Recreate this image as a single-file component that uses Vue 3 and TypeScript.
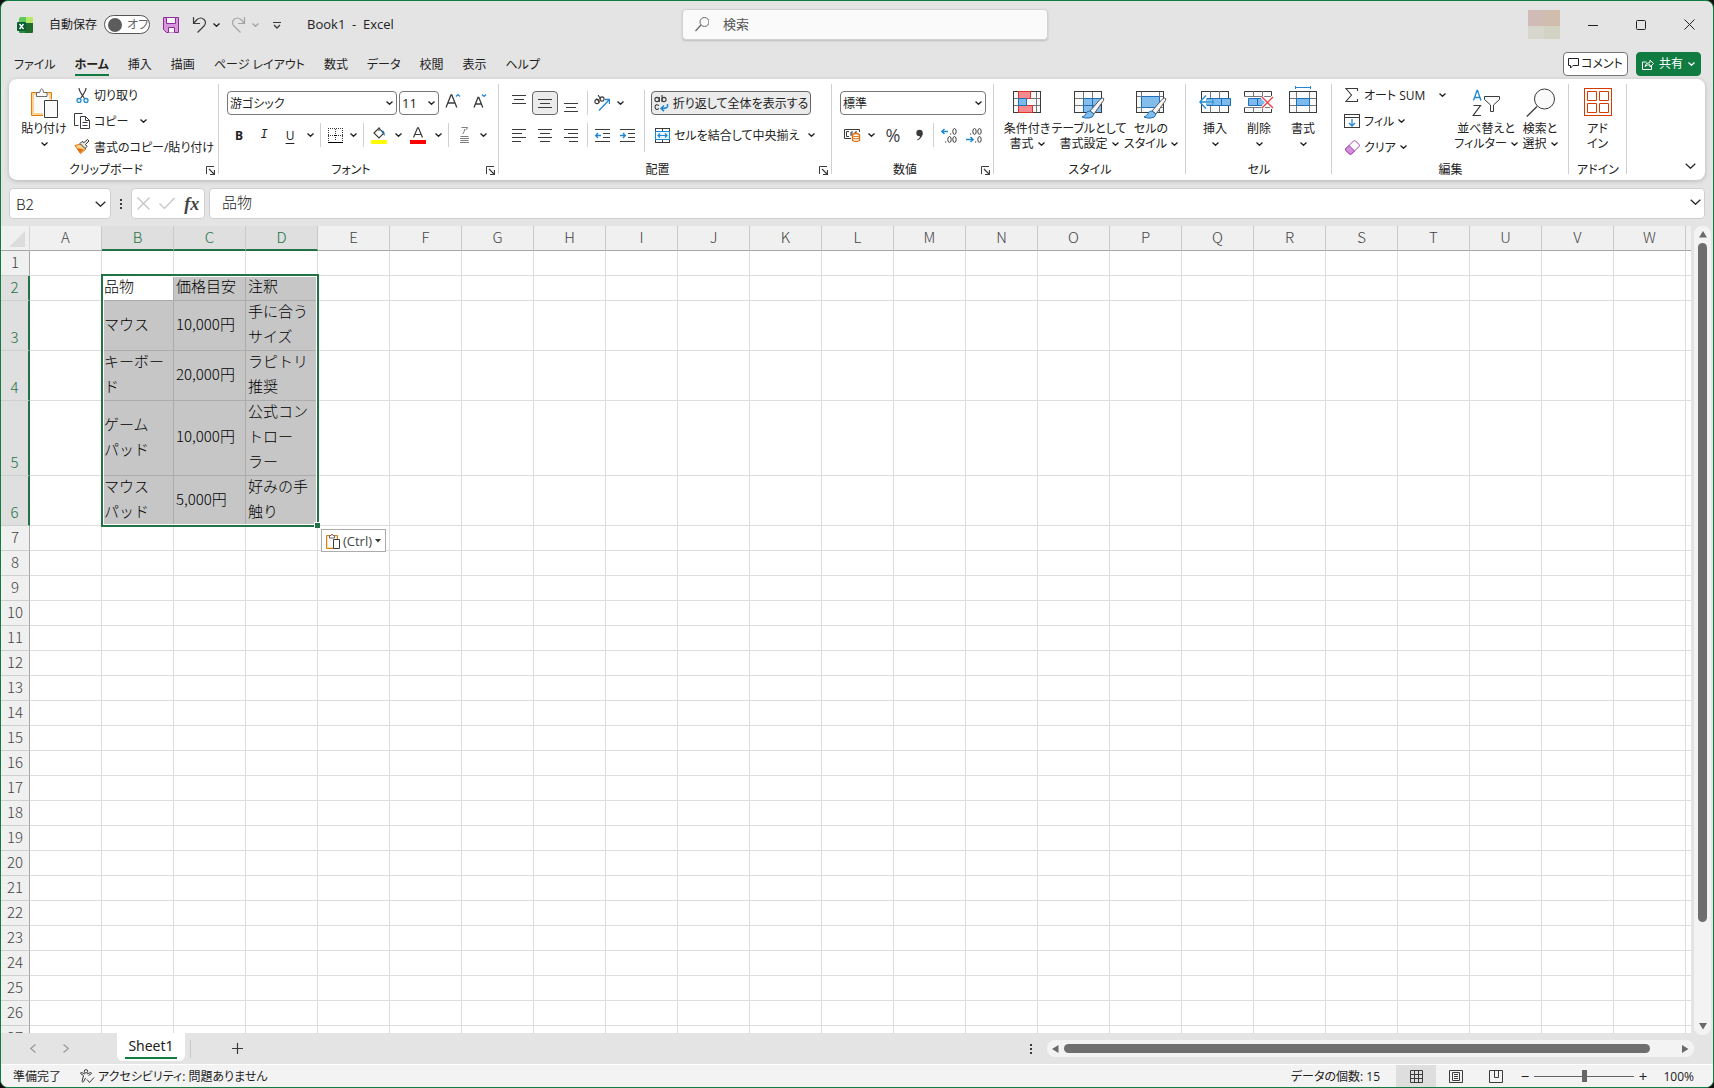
<script setup lang="ts">
import { h, ref } from 'vue'

const K = '#3b3b3b'
const B = '#1e88d2'
const lines = (rows: [number, number][]) =>
  rows.map(([a, b], i) => `<path d="M${a} ${i * 4 + 1.5}H${b}" stroke="${K}"/>`).join('')
const gridBase = `<rect x=".5" y=".5" width="27" height="21" fill="#fafafa" stroke="${K}"/>`

const icons: Record<string, string> = {
  excel: `<path d="M4 0h6v8H2V2q0-2 2-2z" fill="#5fc85a"/><path d="M10 0h5q1 0 1 1v5h-7V0z" fill="#b6e86a"/><path d="M2 6h7v10H3q-1 0-1-1z" fill="#2a8f3c"/><path d="M9 6h7v9q0 1-1 1H8z" fill="#1e6b2c"/><rect x="0" y="5" width="9" height="9" rx="1" fill="#0c5c33"/><path d="M2.500 7l4 5M6.500 7l-4 5" stroke="#fff" stroke-width="1.400"/>`,
  save: `<path d="M.5.5h15v15H3.500l-3-3z" fill="#d896dc" stroke="#8e2a9a"/><path d="M3.500.5h9v6h-9zM5.500 15.500v-5h6v5" fill="#f6f6f6" stroke="#8e2a9a"/>`,
  undo: `<path d="M1.500 0v6.500H8M1.500 6.500L5 2.500Q9-.5 12 2.500T12 9L5.500 15.500" fill="none" stroke="${K}" stroke-width="1.200"/>`,
  redo: `<path d="M13.500 0v6.500H7M13.500 6.500L10 2.500Q6-.5 3 2.500T3 9L9.500 15.500" fill="none" stroke="#a3a3a3" stroke-width="1.200"/>`,
  qat: `<path d="M0 1.500h8" stroke="${K}"/><path d="M1 4l3 3 3-3" fill="none" stroke="${K}" stroke-width="1.300"/>`,
  chev: `<path d="M.5.5L3.500 3.300 6.500.5" fill="none" stroke="currentColor" stroke-width="1.300"/>`,
  chevL: `<path d="M.7.7L5.500 5.300 10.300.7" fill="none" stroke="currentColor" stroke-width="1.200"/>`,
  search: `<circle cx="9.500" cy="5" r="4.500" fill="none" stroke="#666"/><path d="M6 8L.5 14" stroke="#666" stroke-width="1.200"/>`,
  min: `<path d="M0 5.500h10" stroke="#222"/>`,
  max: `<rect x=".5" y=".5" width="9" height="9" rx="1" fill="none" stroke="#222"/>`,
  close: `<path d="M.5.5l10 10M10.500.5l-10 10" stroke="#222"/>`,
  comment: `<path d="M.5.5h10v7H5L2.500 10V7.500h-2z" fill="none" stroke="#222"/>`,
  share: `<path d="M4.500 4H.5v7.500h9V8M3 8.500Q3.500 4.500 8 4.500V2l3.500 3.500L8 9V6.800Q5 6.500 3 8.500z" fill="none" stroke="#fff"/>`,
  paste: `<path d="M1.500 4.500h20v23h-20z" fill="#fbd28f" stroke="#e07c10"/><path d="M4 7h15v18H4z" fill="#fafafa"/><path d="M6.500 8.500v-4h3.200q.8-3.800 2-3.800t2 3.800h3.300v4z" fill="#fafafa" stroke="#6b6b6b"/><path d="M14 12.500h14v18H14z" fill="#fafafa" stroke="#fff" stroke-width="2"/><path d="M14.500 12.500h13v17h-13z" fill="#fafafa" stroke="${K}"/>`,
  cut: `<path d="M3 0q0 3 5.500 10.500M10 0q0 3-5.500 10.500" fill="none" stroke="${K}" stroke-width="1.200"/><circle cx="3" cy="12.500" r="2" fill="none" stroke="${B}" stroke-width="1.300"/><circle cx="10" cy="12.500" r="2" fill="none" stroke="${B}" stroke-width="1.300"/>`,
  copy: `<path d="M4.500 12.500H.5V.5h8" fill="none" stroke="${K}"/><path d="M6.500 3.500h5l4 4v8h-9z" fill="#fff" stroke="${K}"/><path d="M11.500 3.500v4h4M8.500 9.500h5M8.500 12.500h5" fill="none" stroke="${K}"/>`,
  brush: `<path d="M1 6.500l6-1.500 5 5-5.500 4.500z" fill="#fbd28f" stroke="#e0700f"/><path d="M3 9l7 1.500-4 3.500z" fill="#e0700f"/><path d="M6 4.500l5 5 2-2-1.500-2L15 2 13.500.5 10 3.500l-2-1z" fill="#e8e8e8" stroke="${K}"/>`,
  growA: `<path d="M1 14.500L6 2h.8l5 12.500M3 10h6.800" fill="none" stroke="${K}" stroke-width="1.300"/><path d="M11 3.500l2-2 2 2" fill="none" stroke="${B}" stroke-width="1.200"/>`,
  shrinkA: `<path d="M1 14.500L5 4.500h.8l4 10M2.500 11h5.800" fill="none" stroke="${K}" stroke-width="1.300"/><path d="M9 1.500l2 2 2-2" fill="none" stroke="${B}" stroke-width="1.200"/>`,
  border: `<path d="M.5 0v14M14.500 0v14M7.500 1v12" stroke="${K}" stroke-dasharray="1 1"/><path d="M0 .5h15M0 7.500h15" stroke="${K}" stroke-dasharray="1 1"/><path d="M6 7.500h3M0 14.500h15" stroke="#000" stroke-width="1.200"/>`,
  fill: `<path d="M3 6l5-5 4.500 5.500L8 11z" fill="#fff" stroke="${K}" stroke-width="1.100"/><path d="M8 4V.5" stroke="${K}"/><path d="M10 3.500q4.500-.5 3.500 5.500-1.500-1-1.500-3z" fill="#1b6fae"/><rect y="13" width="16" height="4" fill="#ff0"/>`,
  fontA: `<path d="M3.500 10.500L7.600.8h.8l4.100 9.700M5 7.500h6" fill="none" stroke="${K}" stroke-width="1.200"/><rect y="13" width="16" height="4" fill="#f00"/>`,
  ruby: `<path d="M1.500 1.500h6Q7 3.500 5.500 4M4.500 3q.2 3-2 5M.5 10.500h8M0 12.500h9M.5 14.500h8M0 16.500h9" fill="none" stroke="#7c7c7c"/>`,
  three: lines([[0, 14], [2, 12], [0, 14]]),
  left: lines([[0, 14], [0, 10], [0, 14], [0, 9]]),
  center: lines([[0, 14], [2, 12], [0, 14], [2, 12]]),
  right: lines([[0, 14], [4, 14], [0, 14], [5, 14]]),
  outdent: `<path d="M0 1.500h15M8 5.500h7M8 9.500h7M0 13.500h15" stroke="${K}"/><path d="M6 7.500H.8M3 5L.7 7.500 3 10" fill="none" stroke="${B}" stroke-width="1.300"/>`,
  indent: `<path d="M0 1.500h15M8 5.500h7M8 9.500h7M0 13.500h15" stroke="${K}"/><path d="M0 7.500h5.500M3 5l2.300 2.500L3 10" fill="none" stroke="${B}" stroke-width="1.300"/>`,
  orient: `<g fill="none" stroke="${K}" stroke-width="1.100"><circle cx="3" cy="6.500" r="2.100"/><path d="M2.500 3.500l3 4"/><circle cx="8" cy="4" r="2.100"/><path d="M4 0l3 4.500"/></g><path d="M5 15.500L15.500 4.500M11 4.500h4.500v4.500" fill="none" stroke="${B}" stroke-width="1.300"/>`,
  wrap: `<g fill="none" stroke="${K}" stroke-width="1.100"><circle cx="3" cy="4.500" r="2.100"/><path d="M5.300 2v5M8 0v7"/><circle cx="10" cy="4.500" r="2.100"/><path d="M5 10.500q-3.500-2-4 1.500 .5 4 4 1.500"/></g><path d="M13.500 9v2.500Q13 13.500 7.500 13.500M10 10.500l-3 3 3 2.800" fill="none" stroke="${B}" stroke-width="1.500"/>`,
  merge: `<rect x=".5" y=".5" width="14" height="14" fill="#fff" stroke="${K}"/><path d="M7.500 0v3M7.500 12v3" stroke="${K}"/><rect x=".5" y="3.500" width="14" height="8" fill="#e9f4fc" stroke="${B}"/><path d="M3 7.500h9M5 5.500l-2 2 2 2M10 5.500l2 2-2 2" fill="none" stroke="${B}" stroke-width="1.200"/>`,
  money: `<path d="M7 10.500H.5V1.500h15V4" fill="none" stroke="${K}"/><path d="M5 3.500H2.500v5H5M9 4H7v4M9 6H7M11 6V4h2" fill="none" stroke="${K}"/><path d="M8.500 6.500v6q3.500 2 7 0v-6q-3.500-2-7 0z" fill="#fff" stroke="#e0700f" stroke-width="1.300"/><path d="M8.500 8q3.500 1.500 7 0M8.500 10.200q3.500 1.500 7 0" fill="none" stroke="#e0700f"/>`,
  comma: `<circle cx="4.500" cy="4" r="3.200" fill="${K}"/><path d="M7.700 4q0 5-5.200 7.500l-.5-.8Q5.500 9 5 6z" fill="${K}"/>`,
  inc: `<path d="M7 3.500H1M3.500 1L.8 3.500 3.500 6" fill="none" stroke="${B}" stroke-width="1.300"/><g fill="none" stroke="${K}"><ellipse cx="13.500" cy="3.500" rx="1.700" ry="2.900"/><ellipse cx="8.500" cy="11.500" rx="1.700" ry="2.900"/><ellipse cx="13.500" cy="11.500" rx="1.700" ry="2.900"/></g><path d="M9 6h1.200M4 14h1.200" stroke="${K}"/>`,
  dec: `<path d="M0 11.500h7M4.500 9l2.700 2.500L4.500 14" fill="none" stroke="${B}" stroke-width="1.300"/><g fill="none" stroke="${K}"><ellipse cx="8.500" cy="3.500" rx="1.700" ry="2.900"/><ellipse cx="13.500" cy="3.500" rx="1.700" ry="2.900"/><ellipse cx="13.500" cy="11.500" rx="1.700" ry="2.900"/></g><path d="M4 6h1.200M9 14h1.200" stroke="${K}"/>`,
  cond: `${gridBase}<path d="M5.500 0v22M23.500 0v22M0 7.500h28M0 14.500h28" stroke="#777"/><rect x=".5" y=".5" width="27" height="21" fill="none" stroke="${K}"/><path d="M5.500.5h12v7h-12zM5.500 14.500h14v7h-14z" fill="#f98a8f" stroke="#d7342a"/><path d="M5.500 7.500h8v7h-8z" fill="#7cb9ec" stroke="#1f6fb8"/>`,
  table: `${gridBase}<path d="M9.500 7.500h18v14h-18z" fill="#83bdec"/><path d="M9.500 0v22M18.500 0v22M0 7.500h28M0 14.500h28" stroke="#777"/><path d="M9.500 22V7.500H28M18.500 8v14M10 14.500h18" stroke="#1f6fb8" fill="none"/><rect x=".5" y=".5" width="27" height="21" fill="none" stroke="${K}"/><path d="M28.500 7q2 0 1 2.500L20 23l-4-3L26 8.500q1.500-1.500 2.500-1.500z" fill="#f5f5f5" stroke="#555"/><path d="M16 20l4 3q-1 4-5 4-4 .5-7-1 3-.8 4-3.500T16 20z" fill="#83bdec" stroke="#1f6fb8"/>`,
  cellst: `${gridBase}<path d="M5.500 0v22M23.500 0v22M0 5.500h28M0 16.500h28" stroke="#777"/><rect x=".5" y=".5" width="27" height="21" fill="none" stroke="${K}"/><path d="M5.500 5.500h18v11h-18z" fill="#83bdec" stroke="#1f6fb8"/><path d="M28.500 7q2 0 1 2.500L20 23l-4-3L26 8.500q1.500-1.500 2.500-1.500z" fill="#f5f5f5" stroke="#555"/><path d="M16 20l4 3q-1 4-5 4-4 .5-7-1 3-.8 4-3.500T16 20z" fill="#83bdec" stroke="#1f6fb8"/>`,
  insert: `<rect x="2.500" y=".5" width="27" height="21" fill="#fafafa" stroke="${K}"/><path d="M11.500 0v22M20.500 0v22" stroke="#777"/><path d="M7.500 7.500h24v7h-24z" fill="#7cb9ec" stroke="#1f6fb8"/><path d="M22.500 8v6" stroke="#1f6fb8"/><path d="M13 9v4H7v4.500L1 11l6-6.500V9z" fill="#fff" stroke="#fff"/><path d="M14 11H1M7 4.500L.8 11 7 17.500" fill="none" stroke="${B}" stroke-width="1.300"/><path d="M7 9h7v4H7" fill="none" stroke="${B}"/>`,
  remove: `<path d="M.5 5.500v-5h27v5M.5 16.500v5h27v-5" fill="#fafafa" stroke="${K}"/><path d="M9.500 0v6M18.500 0v6M9.500 16v6M18.500 16v6M.5 5.500h27M.5 16.500h27" stroke="#777"/><path d="M4.500 7.500h15l4 3.500-4 3.500h-15z" fill="#7cb9ec" stroke="#1f6fb8"/><path d="M13.500 8v6" stroke="#1f6fb8"/><path d="M18 6l11 11M29 6L18 17" stroke="#fff" stroke-width="3.500"/><path d="M18 6l11 11M29 6L18 17" stroke="#e8434a" stroke-width="1.400"/>`,
  format: `<path d="M6.500 1.500h15M6.500 0v3M21.500 0v3" stroke="${B}"/><rect x=".5" y="5.500" width="27" height="21" fill="#fafafa" stroke="${K}"/><path d="M7.500 5v22M20.500 5v22M0 12.500h28M0 19.500h28" stroke="#777"/><rect x=".5" y="5.500" width="27" height="21" fill="none" stroke="${K}"/><path d="M7.500 12.500h13v7h-13z" fill="#7cb9ec" stroke="#1f6fb8"/>`,
  sum: `<path d="M12.500 3V.5H1l5.500 6.500L1 13.500h11.500V11" fill="none" stroke="${K}" stroke-width="1.100"/>`,
  fillDown: `<rect x=".5" y=".5" width="15" height="13" fill="#fff" stroke="${K}"/><path d="M0 3.500h16" stroke="${K}"/><path d="M8 5v7M5 9l3 3 3-3" fill="none" stroke="${B}" stroke-width="1.300"/>`,
  eraser: `<path d="M1 8.500L8.500 1q1-.7 2 0L14 4.500q.8 1 0 2L6.500 14q-1 .7-2 0L1 10.500q-.7-1 0-2z" fill="#fff" stroke="#a43bb0"/><path d="M1 8.500l3-3 5.500 5.500-3 3q-1 .7-2 0L1 10.500q-.7-1 0-2z" fill="#d68fdc" stroke="#a43bb0"/>`,
  sort: `<path d="M1.500 11.500L5 1.500h.5l3.500 10M2.500 8.500h5.500" fill="none" stroke="${B}" stroke-width="1.300"/><path d="M1.500 16.500h7L1.200 26.500H9" fill="none" stroke="${K}" stroke-width="1.200"/><path d="M12.500 7.500h15v3l-6 5.500v6.500h-3V16l-6-5.500z" fill="#fafafa" stroke="${K}"/>`,
  find: `<circle cx="18.500" cy="11" r="10" fill="#fafafa" stroke="${K}"/><path d="M11 18.500L.8 28.500" stroke="${K}" stroke-width="1.300"/>`,
  addin: `<rect x=".5" y=".5" width="27" height="27" fill="#fff" stroke="#d83b01"/><path d="M3.500 3.500h9v9h-9zM15.500 3.500h9v9h-9zM3.500 15.500h9v9h-9zM15.500 15.500h9v9h-9z" fill="none" stroke="#d83b01"/>`,
  launch: `<path d="M.5 8V.5H8" fill="none" stroke="${K}"/><path d="M3 3l5 5M8.500 4v4.500H4" fill="none" stroke="${K}" stroke-width="1.200"/>`,
  cancel: `<path d="M.5.5l12 12M12.500.5l-12 12" stroke="#c3c3c3" stroke-width="1.200"/>`,
  ok: `<path d="M.5 6.500l5 5 10-10.500" fill="none" stroke="#c3c3c3" stroke-width="1.200"/>`,
  dots: `<path d="M0 0h2v2H0zM0 4h2v2H0zM0 8h2v2H0z" fill="${K}"/>`,
  pasteS: `<path d="M.5 2.500h11v13H.5z" fill="#fbe3bd" stroke="#e07c10"/><path d="M2 4h8v10H2z" fill="#fff"/><path d="M3.500 5V2.500H5Q6-.5 7 2.500h1.500V5z" fill="#fff" stroke="#666"/><path d="M7.500 6.500h6v9h-6z" fill="#fff" stroke="${K}"/>`,
  tri: `<path d="M0 0h6L3 3.500z" fill="${K}"/>`,
  corner: `<path d="M16 0v16H0z" fill="#dcdcdc"/>`,
  prev: `<path d="M5.500.5L.7 4.500l4.800 4" fill="none" stroke="#9a9a9a" stroke-width="1.200"/>`,
  next: `<path d="M.5.5l4.800 4-4.800 4" fill="none" stroke="#9a9a9a" stroke-width="1.200"/>`,
  plus: `<path d="M0 5.500h11M5.500 0v11" stroke="${K}" stroke-width="1.200"/>`,
  up: `<path d="M0 6.500L4 0l4 6.500z" fill="#6a6a6a"/>`,
  down: `<path d="M0 0h8L4 6.500z" fill="#6a6a6a"/>`,
  lt: `<path d="M6.500 0v8L0 4z" fill="#6a6a6a"/>`,
  rt: `<path d="M0 0v8l6.500-4z" fill="#6a6a6a"/>`,
  access: `<circle cx="6" cy="2.300" r="1.700" fill="none" stroke="${K}"/><path d="M5 5L1.500 3.500Q.3 3.500.7 4.700L3.500 6.500 2 12.500q.8 1.500 1.700 0L5.500 9M7 5l3.500-1.500q1.200 0 .8 1.200L8.500 6.500M7 10.500l2.500 3 4.500-5" fill="none" stroke="${K}"/>`,
  vGrid: `<path d="M.5.5h12v12H.5zM4.500 0v13M8.500 0v13M0 4.500h13M0 8.500h13" fill="none" stroke="${K}"/>`,
  vPage: `<path d="M.5.5h13v12H.5zM3.500 2.500h7v8h-7zM5 4.500h4M5 6.500h4M5 8.500h4" fill="none" stroke="${K}"/>`,
  vBreak: `<path d="M.5.5h13v12H.5zM5.500 0v7.500M9.500 0v7.500M5.500 7.500h4" fill="none" stroke="${K}"/>`,
}

const Icon = (p: { n: string; w: number; h: number }) =>
  h('svg', { width: p.w, height: p.h, viewBox: `0 0 ${p.w} ${p.h}`, 'aria-hidden': 'true', innerHTML: icons[p.n] })
Icon.props = ['n', 'w', 'h']

const tabs = ['ファイル', 'ホーム', '挿入', '描画', 'ページ レイアウト', '数式', 'データ', '校閲', '表示', 'ヘルプ']
// The last column is a partly scrolled-in one and carries no label.
const cols = [...'ABCDEFGHIJKLMNOPQRSTUVW'.split(''), '']
const colWidth = 72
const headWidth = 29
const tableWidth = headWidth + colWidth * cols.length

const cells: Record<number, string[]> = {
  2: ['品物', '価格目安', '注釈'],
  3: ['マウス', '10,000円', '手に合う\nサイズ'],
  4: ['キーボー\nド', '20,000円', 'ラピトリ\n推奨'],
  5: ['ゲーム\nパッド', '10,000円', '公式コン\nトロー\nラー'],
  6: ['マウス\nパッド', '5,000円', '好みの手\n触り'],
}
const lineCount: Record<number, number> = { 3: 2, 4: 2, 5: 3, 6: 2 }
const rows = Array.from({ length: 27 }, (_, i) => ({ n: i + 1, height: 25 * (lineCount[i + 1] ?? 1) }))
const inSel = (r: number, c: number) => r >= 2 && r <= 6 && c >= 1 && c <= 3

const autosave = ref(false)
const query = ref('')
const cellName = ref('B2')
const formula = ref('品物')
const zoom = ref(50)
</script>

<template>
  <div class="window">
    <header class="title">
      <div class="title-left">
        <Icon n="excel" :w="16" :h="16" />
        <label class="autosave">自動保存
          <span class="toggle"><input v-model="autosave" type="checkbox" />オフ</span>
        </label>
        <button class="save" aria-label="上書き保存"><Icon n="save" :w="16" :h="16" /></button>
        <button class="hist" aria-label="元に戻す"><Icon n="undo" :w="15" :h="16" /><Icon n="chev" :w="7" :h="4" /></button>
        <button class="hist off" aria-label="やり直し"><Icon n="redo" :w="15" :h="16" /><Icon n="chev" :w="7" :h="4" /></button>
        <button class="qat" aria-label="カスタマイズ"><Icon n="qat" :w="8" :h="8" /></button>
        <span class="doc">Book1&nbsp; -&nbsp; Excel</span>
      </div>
      <label class="search"><Icon n="search" :w="14" :h="15" /><input v-model="query" placeholder="検索" aria-label="検索" /></label>
      <div class="title-right">
        <div class="avatar"><i></i><i></i><i></i><i></i></div>
        <button class="win" aria-label="最小化"><Icon n="min" :w="10" :h="10" /></button>
        <button class="win" aria-label="最大化"><Icon n="max" :w="10" :h="10" /></button>
        <button class="win" aria-label="閉じる"><Icon n="close" :w="11" :h="11" /></button>
      </div>
    </header>

    <nav class="tabs">
      <a v-for="t in tabs" :key="t" href="#" :class="{ active: t === 'ホーム' }">{{ t }}</a>
      <span class="grow"></span>
      <button class="pill"><Icon n="comment" :w="11" :h="11" />コメント</button>
      <button class="pill share"><Icon n="share" :w="12" :h="12" />共有<Icon n="chev" :w="7" :h="4" /></button>
    </nav>

    <section class="ribbon">
      <div class="group clip">
        <div class="body">
          <button class="big"><span class="pic"><Icon n="paste" :w="29" :h="31" /></span>貼り付け<span class="ln"><Icon n="chev" :w="7" :h="4" /></span></button>
          <div class="small">
            <button><span class="si"><Icon n="cut" :w="13" :h="15" /></span>切り取り</button>
            <button><span class="si"><Icon n="copy" :w="16" :h="16" /></span>コピー<span class="far"><Icon n="chev" :w="7" :h="4" /></span></button>
            <button><span class="si"><Icon n="brush" :w="16" :h="16" /></span>書式のコピー/貼り付け</button>
          </div>
        </div>
        <div class="cap">クリップボード</div>
        <button class="launch" aria-label="クリップボードの設定"><Icon n="launch" :w="9" :h="9" /></button>
      </div>

      <div class="group font">
        <div class="body rowsBody">
          <div class="row">
            <span class="combo name"><select aria-label="フォント"><option>游ゴシック</option></select><Icon n="chev" :w="7" :h="4" /></span>
            <span class="combo size"><select aria-label="サイズ"><option>11</option></select><Icon n="chev" :w="7" :h="4" /></span>
            <button class="w28" aria-label="拡大"><Icon n="growA" :w="16" :h="20" /></button>
            <button class="w26" aria-label="縮小"><Icon n="shrinkA" :w="14" :h="20" /></button>
          </div>
          <div class="row">
            <button class="w24 bold">B</button><button class="w26 ital">I</button><button class="w26 under">U</button>
            <button class="w14" aria-label="下線"><Icon n="chev" :w="7" :h="4" /></button><i class="sep"></i>
            <button class="w22" aria-label="罫線"><Icon n="border" :w="15" :h="15" /></button>
            <button class="w14" aria-label="罫線の種類"><Icon n="chev" :w="7" :h="4" /></button><i class="sep"></i>
            <button class="w24" aria-label="塗りつぶし"><Icon n="fill" :w="16" :h="17" /></button>
            <button class="w14" aria-label="塗りつぶしの色"><Icon n="chev" :w="7" :h="4" /></button>
            <button class="w26" aria-label="文字色"><Icon n="fontA" :w="16" :h="17" /></button>
            <button class="w14" aria-label="文字色の選択"><Icon n="chev" :w="7" :h="4" /></button><i class="sep"></i>
            <button class="w24" aria-label="ふりがな"><Icon n="ruby" :w="9" :h="18" /></button>
            <button class="w14" aria-label="ふりがなの設定"><Icon n="chev" :w="7" :h="4" /></button>
          </div>
        </div>
        <div class="cap">フォント</div>
        <button class="launch" aria-label="フォントの設定"><Icon n="launch" :w="9" :h="9" /></button>
      </div>

      <div class="group align">
        <div class="body">
          <div class="rowsBody">
            <div class="row">
              <button class="w26 up" aria-label="上揃え"><Icon n="three" :w="14" :h="11" /></button>
              <button class="w26 on" aria-label="上下中央揃え"><Icon n="three" :w="14" :h="11" /></button>
              <button class="w26 dn" aria-label="下揃え"><Icon n="three" :w="14" :h="11" /></button>
              <i class="sep"></i>
              <button class="w22" aria-label="方向"><Icon n="orient" :w="16" :h="16" /></button>
              <button class="w14" aria-label="方向の選択"><Icon n="chev" :w="7" :h="4" /></button>
            </div>
            <div class="row">
              <button class="w26" aria-label="左揃え"><Icon n="left" :w="14" :h="15" /></button>
              <button class="w26" aria-label="中央揃え"><Icon n="center" :w="14" :h="15" /></button>
              <button class="w26" aria-label="右揃え"><Icon n="right" :w="14" :h="15" /></button>
              <i class="sep"></i>
              <button class="w22" aria-label="インデントを減らす"><Icon n="outdent" :w="15" :h="15" /></button>
              <button class="w28" aria-label="インデントを増やす"><Icon n="indent" :w="15" :h="15" /></button>
            </div>
          </div>
          <i class="tall"></i>
          <div class="rowsBody">
            <button class="wrapb"><Icon n="wrap" :w="15" :h="17" />折り返して全体を表示する</button>
            <button class="mergeb"><Icon n="merge" :w="15" :h="15" />セルを結合して中央揃え<span class="far"><Icon n="chev" :w="7" :h="4" /></span></button>
          </div>
        </div>
        <div class="cap">配置</div>
        <button class="launch" aria-label="配置の設定"><Icon n="launch" :w="9" :h="9" /></button>
      </div>

      <div class="group number">
        <div class="body rowsBody">
          <div class="row"><span class="combo fmt"><select aria-label="表示形式"><option>標準</option></select><Icon n="chev" :w="7" :h="4" /></span></div>
          <div class="row">
            <button class="w24" aria-label="通貨"><Icon n="money" :w="17" :h="15" /></button>
            <button class="w14" aria-label="通貨の選択"><Icon n="chev" :w="7" :h="4" /></button>
            <button class="w30 pct">%</button>
            <button class="w22" aria-label="桁区切り"><Icon n="comma" :w="9" :h="12" /></button><i class="sep"></i>
            <button class="w24" aria-label="小数点以下を増やす"><Icon n="inc" :w="16" :h="15" /></button>
            <button class="w26" aria-label="小数点以下を減らす"><Icon n="dec" :w="16" :h="15" /></button>
          </div>
        </div>
        <div class="cap">数値</div>
        <button class="launch" aria-label="数値の設定"><Icon n="launch" :w="9" :h="9" /></button>
      </div>

      <div class="group style">
        <div class="body">
          <button class="big"><span class="pic"><Icon n="cond" :w="28" :h="28" /></span>条件付き<span class="ln">書式<Icon n="chev" :w="7" :h="4" /></span></button>
          <button class="big"><span class="pic"><Icon n="table" :w="31" :h="28" /></span>テーブルとして<span class="ln">書式設定<Icon n="chev" :w="7" :h="4" /></span></button>
          <button class="big"><span class="pic"><Icon n="cellst" :w="31" :h="28" /></span>セルの<span class="ln">スタイル<Icon n="chev" :w="7" :h="4" /></span></button>
        </div>
        <div class="cap">スタイル</div>
      </div>

      <div class="group cell">
        <div class="body">
          <button class="big"><span class="pic"><Icon n="insert" :w="32" :h="28" /></span>挿入<span class="ln"><Icon n="chev" :w="7" :h="4" /></span></button>
          <button class="big"><span class="pic"><Icon n="remove" :w="30" :h="28" /></span>削除<span class="ln"><Icon n="chev" :w="7" :h="4" /></span></button>
          <button class="big"><span class="pic"><Icon n="format" :w="28" :h="33" /></span>書式<span class="ln"><Icon n="chev" :w="7" :h="4" /></span></button>
        </div>
        <div class="cap">セル</div>
      </div>

      <div class="group edit">
        <div class="body">
          <div class="small">
            <button><span class="si"><Icon n="sum" :w="14" :h="14" /></span>オート SUM<span class="far"><Icon n="chev" :w="7" :h="4" /></span></button>
            <button><span class="si"><Icon n="fillDown" :w="16" :h="14" /></span>フィル<Icon class="gap" n="chev" :w="7" :h="4" /></button>
            <button><span class="si"><Icon n="eraser" :w="15" :h="15" /></span>クリア<Icon class="gap" n="chev" :w="7" :h="4" /></button>
          </div>
          <button class="big"><span class="pic"><Icon n="sort" :w="28" :h="30" /></span>並べ替えと<span class="ln">フィルター<Icon n="chev" :w="7" :h="4" /></span></button>
          <button class="big narrow"><span class="pic"><Icon n="find" :w="29" :h="31" /></span>検索と<span class="ln">選択<Icon n="chev" :w="7" :h="4" /></span></button>
        </div>
        <div class="cap">編集</div>
      </div>

      <div class="group addins">
        <div class="body">
          <button class="big"><span class="pic"><Icon n="addin" :w="28" :h="31" /></span>アド<span class="ln">イン</span></button>
        </div>
        <div class="cap">アドイン</div>
      </div>
      <span class="grow"></span>
      <button class="collapse" aria-label="リボンを折りたたむ"><Icon n="chevL" :w="11" :h="6" /></button>
    </section>

    <section class="fbar">
      <div class="box namebox"><input v-model="cellName" aria-label="名前ボックス" /><Icon n="chevL" :w="11" :h="6" /></div>
      <span class="dots"><Icon n="dots" :w="2" :h="10" /></span>
      <div class="box fx">
        <button aria-label="キャンセル"><Icon n="cancel" :w="13" :h="13" /></button>
        <button aria-label="入力"><Icon n="ok" :w="16" :h="13" /></button>
        <button class="fn">fx</button>
      </div>
      <div class="box formula"><input v-model="formula" aria-label="数式バー" /><Icon n="chevL" :w="11" :h="6" /></div>
    </section>

    <main class="work">
      <div class="sheet">
        <table :style="{ width: tableWidth + 'px' }">
          <colgroup><col :style="{ width: headWidth + 'px' }" /><col v-for="c in cols" :key="c" :style="{ width: colWidth + 'px' }" /></colgroup>
          <thead>
            <tr>
              <th class="corner"><Icon n="corner" :w="16" :h="16" /></th>
              <th v-for="(c, i) in cols" :key="c" scope="col" :class="{ hot: i >= 1 && i <= 3 }">{{ c }}</th>
            </tr>
          </thead>
          <tbody>
            <tr v-for="r in rows" :key="r.n" :style="{ height: r.height + 'px' }">
              <th scope="row" :class="{ hot: r.n >= 2 && r.n <= 6 }">{{ r.n }}</th>
              <td v-for="(c, i) in cols" :key="c" :class="{ picked: inSel(r.n, i), cur: r.n === 2 && i === 1 }"><div v-if="inSel(r.n, i)">{{ cells[r.n][i - 1] }}</div></td>
            </tr>
          </tbody>
        </table>
        <div class="selection"><i></i></div>
        <button class="pasteopt"><Icon n="pasteS" :w="14" :h="16" />(Ctrl)<Icon n="tri" :w="6" :h="4" /></button>
      </div>
      <div class="vscroll"><Icon n="up" :w="8" :h="7" /><div></div><Icon n="down" :w="8" :h="7" /></div>
    </main>

    <footer class="sheetbar">
      <button class="nav" aria-label="前のシート"><Icon n="prev" :w="6" :h="9" /></button>
      <button class="nav" aria-label="次のシート"><Icon n="next" :w="6" :h="9" /></button>
      <button class="tab"><span>Sheet1</span></button>
      <i class="tsep"></i>
      <button class="add" aria-label="新しいシート"><Icon n="plus" :w="11" :h="11" /></button>
      <span class="grow"></span>
      <span class="bdots"><Icon n="dots" :w="2" :h="10" /></span>
      <div class="hscroll"><Icon n="lt" :w="7" :h="8" /><div></div><Icon n="rt" :w="7" :h="8" /></div>
    </footer>

    <footer class="status">
      <span>準備完了</span>
      <span class="acc"><Icon n="access" :w="15" :h="14" />アクセシビリティ: 問題ありません</span>
      <span class="grow"></span>
      <span class="count">データの個数: 15</span>
      <button class="view on" aria-label="標準"><Icon n="vGrid" :w="13" :h="13" /></button>
      <button class="view" aria-label="ページ レイアウト"><Icon n="vPage" :w="14" :h="13" /></button>
      <button class="view" aria-label="改ページ プレビュー"><Icon n="vBreak" :w="14" :h="13" /></button>
      <button class="zb" aria-label="縮小">−</button>
      <input v-model="zoom" class="zoom" type="range" min="0" max="100" aria-label="ズーム" />
      <button class="zb" aria-label="拡大">+</button>
      <span class="pc">100%</span>
    </footer>
  </div>
</template>

<style>
body {
  background: #111;
}
</style>

<style scoped>
* {
  box-sizing: border-box;
}
.window {
  display: flex;
  flex-direction: column;
  height: 100vh;
  overflow: hidden;
  border: 1px solid #107c41;
  border-radius: 8px;
  background: #e4e4e4;
  color: #222;
  font: 12px/15px "Open Sans", "Noto Sans CJK JP", sans-serif;
  font-feature-settings: "palt";
}
svg {
  display: block;
  flex: none;
}
button {
  display: flex;
  align-items: center;
  justify-content: center;
  padding: 0;
  border: 0;
  background: none;
  color: inherit;
  font: inherit;
  font-feature-settings: inherit;
  white-space: nowrap;
}
input,
select {
  min-width: 0;
  padding: 0;
  border: 0;
  outline: 0;
  background: none;
  color: inherit;
  font: inherit;
  font-feature-settings: inherit;
}
.grow {
  flex: 1;
}

.title {
  display: grid;
  grid-template-columns: minmax(0, 1fr) 366px minmax(0, 1fr);
  align-items: center;
  flex: none;
  height: 47px;
  padding-left: 16px;
}
.title-left {
  display: flex;
  align-items: center;
}
.autosave {
  display: flex;
  align-items: center;
  gap: 7px;
  margin-left: 16px;
}
.toggle {
  display: flex;
  align-items: center;
  gap: 5px;
  width: 46px;
  height: 19px;
  padding-left: 3px;
  border: 1px solid #555;
  border-radius: 10px;
  background: #fff;
  color: #666;
}
.toggle input {
  appearance: none;
  width: 14px;
  height: 14px;
  margin: 0;
  border-radius: 50%;
  background: #5c5c5c;
}
.save {
  width: 42px;
}
.hist {
  justify-content: flex-start;
  gap: 6px;
  width: 39px;
}
.hist.off {
  color: #a3a3a3;
}
.qat {
  width: 14px;
}
.doc {
  margin-left: 23px;
  font-size: 13px;
  white-space: nowrap;
}
.search {
  display: flex;
  align-items: center;
  gap: 14px;
  height: 31px;
  padding-left: 12px;
  border: 1px solid #d2d2d2;
  border-radius: 4px;
  background: #fafafa;
  box-shadow: 0 1px 2px #bbb;
}
.search input {
  flex: 1;
  font-size: 13px;
}
.search input::placeholder {
  color: #555;
  opacity: 1;
}
.title-right {
  display: flex;
  justify-content: flex-end;
  align-items: center;
}
.avatar {
  display: grid;
  grid-template-columns: 16px 16px;
  grid-template-rows: 16px 13px;
  margin-right: 9px;
}
.avatar i:nth-child(1) {
  background: #d0bbb6;
}
.avatar i:nth-child(2) {
  background: #d0bdae;
}
.avatar i:nth-child(3) {
  background: #d8d7cd;
}
.avatar i:nth-child(4) {
  background: #d3d3c5;
}
.win {
  width: 48px;
  height: 40px;
}

.tabs {
  display: flex;
  align-items: center;
  flex: none;
  gap: 19px;
  height: 31px;
  padding: 0 12px 0 13px;
}
.tabs a {
  height: 24px;
  padding-top: 5px;
  color: inherit;
  line-height: 16px;
  text-decoration: none;
  white-space: nowrap;
}
.tabs a.active {
  border-bottom: 2px solid #107c41;
  font-weight: 700;
}
.pill {
  gap: 2px;
  width: 65px;
  height: 24px;
  border: 1px solid #777;
  border-radius: 4px;
  background: #fff;
}
.pill.share {
  gap: 5px;
  margin-left: -11px;
  border-color: #107c41;
  background: #107c41;
  color: #fff;
}

.ribbon {
  display: flex;
  flex: none;
  height: 101px;
  margin: 0 8px 8px;
  border-radius: 8px;
  background: #fff;
  box-shadow: 0 1px 4px #b5b5b5;
}
.group {
  position: relative;
  display: flex;
  flex-direction: column;
  flex: none;
}
.group::after {
  content: "";
  position: absolute;
  top: 5px;
  right: 0;
  width: 1px;
  height: 90px;
  background: #d0d0d0;
}
.clip {
  width: 210px;
}
.font {
  width: 280px;
}
.align {
  width: 333px;
}
.number {
  width: 162px;
}
.style {
  width: 192px;
}
.cell {
  width: 146px;
}
.edit {
  width: 237px;
}
.addins {
  width: 58px;
}
.body {
  display: flex;
  height: 82px;
}
.cap {
  line-height: 18px;
  text-align: center;
  white-space: nowrap;
}
.clip .cap,
.font .cap,
.align .cap,
.number .cap {
  padding-right: 16px;
}
.launch {
  position: absolute;
  right: 4px;
  bottom: 5px;
}
.big {
  flex-direction: column;
  justify-content: flex-start;
  width: 62px;
  padding-top: 9px;
}
.pic {
  display: flex;
  align-items: flex-end;
  height: 33px;
  padding-bottom: 2px;
}
.style .pic,
.cell .pic {
  align-items: flex-start;
  padding-top: 3px;
}
.cell .big:last-child .pic {
  height: 35px;
  margin-top: -2px;
  padding-top: 0;
}
.ln {
  display: flex;
  align-items: center;
  gap: 4px;
  height: 15px;
}
.clip .body {
  padding-left: 5px;
}
.clip .big {
  width: 60px;
}
.small {
  padding-top: 3px;
}
.small button {
  justify-content: flex-start;
  width: 100%;
  height: 26px;
}
.small .si {
  display: flex;
  justify-content: center;
  width: 16px;
  margin-right: 4px;
}
.small .gap {
  margin-left: 4px;
}
.clip .far {
  margin-left: 12px;
}
.rowsBody {
  display: flex;
  flex-direction: column;
  gap: 8px;
  padding-top: 12px;
}
.row {
  display: flex;
  align-items: center;
  height: 24px;
}
.font .body,
.number .body {
  padding-left: 8px;
}
.align .body {
  padding-left: 7px;
}
.combo {
  position: relative;
  display: flex;
  align-items: center;
  height: 24px;
  border: 1px solid #777;
  border-radius: 4px;
  background: #fff;
}
.combo select {
  appearance: none;
  width: 100%;
  height: 22px;
  padding-left: 2px;
}
.combo svg {
  position: absolute;
  right: 3px;
  pointer-events: none;
}
.name {
  width: 170px;
  margin-right: 2px;
}
.size {
  width: 40px;
}
.size select {
  font-size: 13px;
}
.fmt {
  width: 146px;
}
.w14 {
  width: 14px;
}
.w22 {
  width: 22px;
}
.w24 {
  width: 24px;
}
.w26 {
  width: 26px;
}
.w28 {
  width: 28px;
}
.w30 {
  width: 30px;
}
.row button {
  height: 24px;
}
.sep {
  flex: none;
  width: 1px;
  height: 24px;
  margin: 0 3px;
  background: #d0d0d0;
}
.bold {
  font-weight: 700;
}
.ital {
  font-family: "Liberation Mono", monospace;
  font-style: italic;
}
.under {
  text-decoration: underline;
  text-underline-offset: 3px;
}
.pct {
  font-size: 18px;
  color: #444;
}
.row .up {
  padding-bottom: 8px;
}
.row .dn {
  padding-top: 8px;
}
.row .on {
  border: 1px solid #666;
  border-radius: 4px;
  background: #ebebeb;
}
.tall {
  width: 1px;
  height: 62px;
  margin: 11px 6px 0 3px;
  background: #d0d0d0;
}
.wrapb,
.mergeb {
  gap: 4px;
  height: 24px;
}
.wrapb {
  width: 160px;
  border: 1px solid #666;
  border-radius: 4px;
  background: #ebebeb;
}
.mergeb {
  justify-content: flex-start;
  width: 164px;
  padding-left: 4px;
}
.mergeb .far,
.edit .far {
  margin-left: auto;
}
.style .body {
  padding-left: 2px;
}
.cell .body {
  padding-left: 7px;
}
.cell .big {
  width: 44px;
}
.edit .body {
  padding-left: 12px;
}
.edit .small {
  width: 102px;
  margin-right: 10px;
}
.edit .big {
  width: 60px;
}
.edit .big.narrow {
  width: 48px;
}
.addins .big {
  width: 57px;
}
.collapse {
  align-self: flex-end;
  margin: 0 9px 11px 0;
}

.fbar {
  display: flex;
  flex: none;
  height: 31px;
  margin: 0 8px 7px;
}
.box {
  display: flex;
  align-items: center;
  border: 1px solid #cfcfcf;
  border-radius: 4px;
  background: #fff;
}
.namebox {
  width: 102px;
  padding: 0 4px 0 6px;
}
.namebox input {
  flex: 1;
  font: 300 15px/20px "Noto Sans CJK JP", sans-serif;
}
.dots {
  display: flex;
  align-items: center;
  justify-content: center;
  width: 20px;
}
.fx {
  justify-content: space-around;
  width: 74px;
  margin-right: 4px;
}
.fn {
  color: #444;
  font: italic 700 18px/20px "Liberation Serif", serif;
}
.formula {
  flex: 1;
  padding: 0 3px 3px 12px;
}
.formula input {
  flex: 1;
  font: 300 15px/20px "Noto Sans CJK JP", sans-serif;
  font-feature-settings: normal;
}

.work {
  display: grid;
  grid-template-columns: minmax(0, 1fr) 22px;
  flex: 1;
  min-height: 0;
}
.sheet {
  position: relative;
  overflow: hidden;
  background: #fff;
  font: 300 15px/25px "Noto Sans CJK JP", sans-serif;
  font-feature-settings: normal;
}
table {
  table-layout: fixed;
  border-collapse: separate;
  border-spacing: 0;
}
th {
  height: 25px;
  padding: 0;
  border-right: 1px solid #c9c9c9;
  border-bottom: 1px solid #a6a6a6;
  background: #f0f0f0;
  color: #444;
  font-weight: 300;
  line-height: 22px;
  vertical-align: top;
}
th.hot {
  background: #dfdfdf;
  color: #217346;
}
thead th.hot {
  border-bottom: 2px solid #217346;
}
.corner {
  padding: 5px 0 0 8px;
  border-right-color: #d6d6d6;
}
tbody th {
  padding-bottom: 2px;
  border-right-color: #a6a6a6;
  border-bottom-color: #cfcfcf;
  vertical-align: bottom;
}
tbody th.hot {
  border-right: 2px solid #217346;
}
td {
  padding: 0 0 0 2px;
  border-right: 1px solid #dedede;
  border-bottom: 1px solid #dedede;
  color: #000;
  white-space: pre;
}
td div {
  margin: -3px 0 2px;
}
td.picked {
  border-color: #acacac;
  background: #c6c6c6;
  vertical-align: middle;
}
td.cur {
  background: #fff;
}
.selection {
  position: absolute;
  top: 48px;
  left: 100px;
  width: 218px;
  height: 253px;
  border: 2px solid #217346;
  box-shadow: inset 0 0 0 1px #fff;
  pointer-events: none;
}
.selection i {
  position: absolute;
  right: -3px;
  bottom: -3px;
  width: 6px;
  height: 6px;
  border: 1px solid #fff;
  border-width: 1px 0 0 1px;
  background: #217346;
}
.pasteopt {
  position: absolute;
  top: 303px;
  left: 320px;
  gap: 3px;
  width: 65px;
  height: 23px;
  border: 1px solid #ababab;
  background: #fff;
  color: #444;
  font: 13px/18px "Open Sans", sans-serif;
}
.vscroll {
  display: flex;
  flex-direction: column;
  align-items: center;
  gap: 5px;
  width: 17px;
  margin: 0 0 -2px 3px;
  padding: 5px 0;
  border-radius: 8px;
  background: #f3f3f3;
}
.vscroll div {
  width: 9px;
  height: 85%;
  margin-bottom: auto;
  border-radius: 5px;
  background: #6e6e6e;
}

.sheetbar {
  display: flex;
  align-items: center;
  flex: none;
  height: 31px;
  padding-left: 15px;
}
.nav {
  width: 33px;
  height: 20px;
}
.tab {
  align-self: flex-start;
  width: 68px;
  height: 28px;
  margin-left: 35px;
  border-radius: 0 0 6px 6px;
  background: #fff;
  font: 14px/22px "Noto Sans", sans-serif;
}
.tab span {
  padding: 0 3px;
  border-bottom: 2px solid #107c41;
}
.tsep {
  width: 1px;
  height: 18px;
  margin-left: 5px;
  background: #c8c8c8;
}
.add {
  width: 36px;
  margin-left: 28px;
}
.bdots {
  margin-right: 15px;
}
.hscroll {
  display: flex;
  align-items: center;
  gap: 5px;
  width: 647px;
  height: 17px;
  margin-right: 19px;
  padding: 0 5px;
  border-radius: 8px;
  background: #f3f3f3;
}
.hscroll div {
  width: 92%;
  height: 9px;
  margin-right: auto;
  border-radius: 5px;
  background: #6e6e6e;
}
.status {
  display: flex;
  align-items: center;
  flex: none;
  height: 23px;
  padding: 0 19px 0 12px;
  border-top: 1px solid #fff;
  background: #f3f3f3;
  white-space: nowrap;
}
.acc {
  display: flex;
  align-items: center;
  gap: 3px;
  margin-left: 19px;
}
.count {
  margin-right: 16px;
}
.view {
  width: 40px;
  height: 22px;
}
.view.on {
  background: #dedede;
}
.zb {
  width: 18px;
  font-size: 15px;
}
.zoom {
  appearance: none;
  width: 100px;
  height: 14px;
  margin: 0;
  background: linear-gradient(#666, #666) center / 100% 1px no-repeat;
}
.zoom::-webkit-slider-thumb {
  appearance: none;
  width: 5px;
  height: 12px;
  background: #666;
}
.pc {
  width: 42px;
  text-align: right;
}
</style>
